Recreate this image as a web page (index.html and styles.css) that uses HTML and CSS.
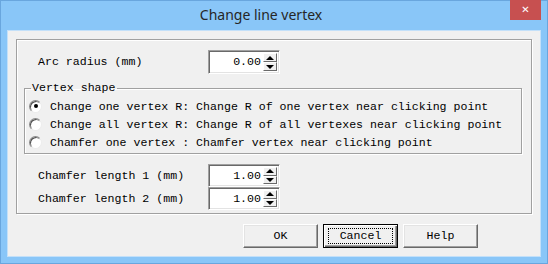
FILE: index.html
```html
<!DOCTYPE html>
<html lang="en">

<head>
  <meta charset="UTF-8" />
  <title>Change line vertex</title>
  <link rel="stylesheet" href="styles.css">
</head>

<body>
  <div class="window">
    <div class="titlebar">
      <span class="title">Change line vertex</span>
      <div class="close">&#x2715;</div>
    </div>

    <div class="client">
      <div class="panel">
        <div class="field-row arc">
          <label>Arc radius (mm)</label>
          <div class="spin">
            <span class="value">0.00</span>
            <div class="spin-buttons">
              <span class="spin-up"></span>
              <span class="spin-down"></span>
            </div>
          </div>
        </div>

        <fieldset class="shape">
          <legend>Vertex shape</legend>
          <div class="option">
            <span class="radio checked"></span>
            <span>Change one vertex R: Change R of one vertex near clicking point</span>
          </div>
          <div class="option">
            <span class="radio"></span>
            <span>Change all vertex R: Change R of all vertexes near clicking point</span>
          </div>
          <div class="option">
            <span class="radio"></span>
            <span>Chamfer one vertex : Chamfer vertex near clicking point</span>
          </div>
        </fieldset>

        <div class="chamfer">
          <div class="field-row">
            <label>Chamfer length 1 (mm)</label>
            <div class="spin">
              <span class="value">1.00</span>
              <div class="spin-buttons">
                <span class="spin-up"></span>
                <span class="spin-down"></span>
              </div>
            </div>
          </div>
          <div class="field-row">
            <label>Chamfer length 2 (mm)</label>
            <div class="spin">
              <span class="value">1.00</span>
              <div class="spin-buttons">
                <span class="spin-up"></span>
                <span class="spin-down"></span>
              </div>
            </div>
          </div>
        </div>
      </div>

      <div class="buttons">
        <div class="btn">OK</div>
        <div class="btn default"><span class="focus">Cancel</span></div>
        <div class="btn">Help</div>
      </div>
    </div>
  </div>
</body>

</html>
```

FILE: styles.css
```css
:root {
  --frame: #89c6f8;
  --frame-edge: #69a6de;
  --face: #f0f0f0;
  --etch: #a0a0a0;
  --mono: 'Liberation Mono', 'DejaVu Sans Mono', monospace;
  --font-size: 11.6px;
}

* {
  box-sizing: border-box;
  margin: 0;
  padding: 0;
}

body {
  background: #fff;
}

.window {
  width: 548px;
  height: 264px;
  background-color: var(--frame);
  border: 1px solid var(--frame-edge);
  display: flex;
  flex-direction: column;
}

.titlebar {
  height: 30px;
  display: flex;
  align-items: flex-start;
  padding-left: 11px;
}

.title {
  flex: 1;
  text-align: center;
  font-family: 'Noto Sans', 'Open Sans', sans-serif;
  font-size: 14px;
  line-height: 28px;
  color: #262626;
}

.close {
  width: 31px;
  height: 20px;
  margin-top: -1px;
  margin-right: 6px;
  background-color: #c75050;
  color: #fff;
  font-family: 'DejaVu Sans', sans-serif;
  font-size: 10px;
  font-weight: bold;
  line-height: 20px;
  text-align: center;
}

.client {
  flex: 1;
  margin: 0 7px 7px;
  background-color: var(--face);
  box-shadow: 0 0 0 1px #c3e0f9;
  padding: 8px 8px 0;
  font-family: var(--mono);
  font-size: var(--font-size);
  color: #000;
}

.panel {
  border: 1px solid var(--etch);
  box-shadow: inset 1px 1px 0 #fff, 1px 1px 0 #fff;
  padding: 10px 9px 3px 7px;
}

.field-row {
  display: grid;
  grid-template-columns: 170px 72px;
  align-items: center;
  padding-left: 14px;
}

.field-row label {
  line-height: 14px;
}

.spin {
  height: 23px;
  background: #fff;
  border-style: solid;
  border-width: 1px;
  border-color: var(--etch) #fff #fff var(--etch);
  box-shadow: inset 1px 1px 0 #696969, inset -1px -1px 0 #e3e3e3;
  display: flex;
  align-items: center;
  justify-content: flex-end;
  padding: 2px;
}

.arc .spin {
  height: 24px;
}

.value {
  padding-right: 2px;
  line-height: 14px;
}

.spin-buttons {
  width: 14px;
  align-self: stretch;
  display: flex;
  flex-direction: column;
}

.spin-up,
.spin-down {
  flex: 1;
  background-color: var(--face);
  border-style: solid;
  border-width: 1px;
  border-color: #fff #696969 #696969 #fff;
  display: flex;
  align-items: center;
  justify-content: center;
}

.spin-up::after {
  content: "";
  border-left: 4px solid transparent;
  border-right: 4px solid transparent;
  border-bottom: 4px solid #000;
}

.spin-down::after {
  content: "";
  border-left: 4px solid transparent;
  border-right: 4px solid transparent;
  border-top: 4px solid #000;
}

.shape {
  margin-top: 7px;
  border: 1px solid var(--etch);
  box-shadow: inset 1px 1px 0 #fff, 1px 1px 0 #fff;
  padding: 2px 0 2px 4px;
  min-width: 0;
}

.shape legend {
  margin-left: 2px;
  padding: 0 1px;
  line-height: 14px;
  font-size: var(--font-size);
}

.option {
  height: 18px;
  display: flex;
  align-items: center;
  gap: 8px;
  white-space: nowrap;
}

.radio {
  width: 13px;
  height: 13px;
  border-radius: 50%;
  background-color: #fff;
  border: 1px solid;
  border-color: #8a8a8a #ececec #ececec #8a8a8a;
  box-shadow: inset 1px 1px 0 #505050;
  display: flex;
  align-items: center;
  justify-content: center;
}

.radio.checked::after {
  content: "";
  width: 4px;
  height: 4px;
  border-radius: 50%;
  background-color: #000;
}

.chamfer {
  margin-top: 10px;
}

.buttons {
  display: flex;
  gap: 5px;
  margin-top: 10px;
  padding-left: 227px;
}

.btn {
  width: 75px;
  height: 24px;
  background-color: var(--face);
  border: 1px solid;
  border-color: #fff #696969 #696969 #fff;
  box-shadow: inset -1px -1px 0 #a0a0a0, inset 1px 1px 0 #e3e3e3;
  display: flex;
  align-items: center;
  justify-content: center;
  line-height: 14px;
}

.btn.default {
  border: 1px solid #000;
  box-shadow: inset 1px 1px 0 #fff, inset -1px -1px 0 #696969, inset -2px -2px 0 #a0a0a0;
}

.focus {
  width: 65px;
  height: 16px;
  border: 1px dotted #000;
  display: flex;
  align-items: center;
  justify-content: center;
}
```
